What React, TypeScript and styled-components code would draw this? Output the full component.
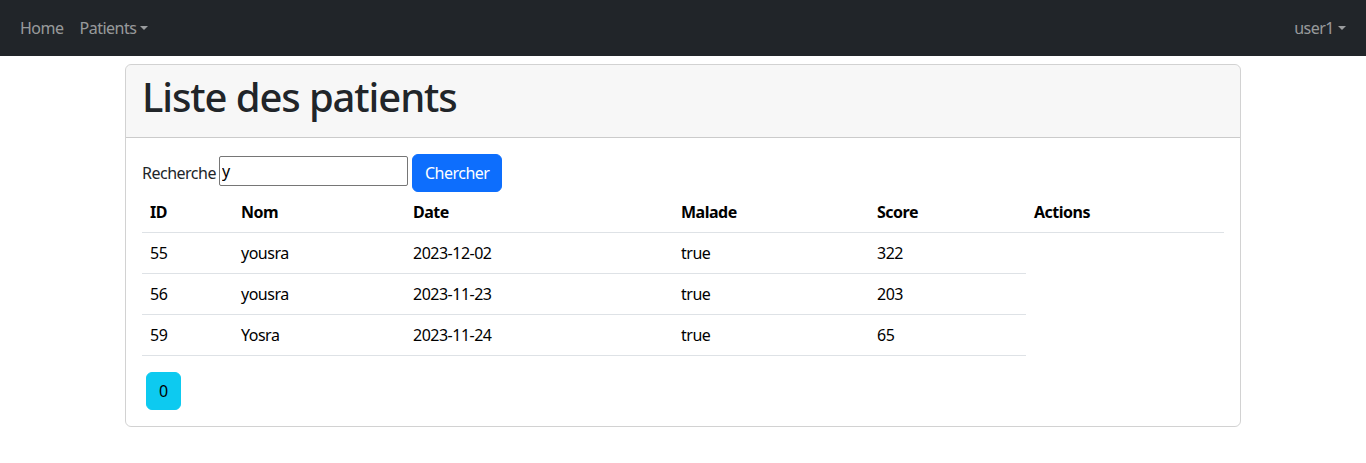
import React from "react";
import styled, { createGlobalStyle } from "styled-components";

const FONT = `"Noto Sans", "Open Sans", "Liberation Sans", sans-serif`;

const Global = createGlobalStyle`
  * { box-sizing: border-box; }
  body {
    margin: 0;
    font-family: ${FONT};
    font-size: 16px;
    line-height: 1.5;
    letter-spacing: -0.5px;
    color: #212529;
    background: #fff;
  }
`;

const NavBar = styled.nav`
  height: 56px;
  background: #212529;
  display: flex;
  align-items: center;
  justify-content: space-between;
  padding: 0 12px;
`;

const NavGroup = styled.div`
  display: flex;
  align-items: center;
`;

const NavLink = styled.a`
  color: rgba(255, 255, 255, 0.55);
  text-decoration: none;
  padding: 8px;
  font-size: 16px;
  line-height: 24px;
  cursor: pointer;
`;

const Caret = styled.span`
  display: inline-block;
  margin-left: 4px;
  vertical-align: 4px;
  border-top: 4.8px solid;
  border-right: 4.8px solid transparent;
  border-left: 4.8px solid transparent;
  border-bottom: 0;
`;

const Container = styled.div`
  width: 1140px;
  margin: 0 auto;
  padding: 0 12px;
`;

const Card = styled.div`
  margin-top: 8px;
  border: 1px solid rgba(0, 0, 0, 0.175);
  border-radius: 6px;
  overflow: hidden;
`;

const CardHeader = styled.div`
  background: rgba(0, 0, 0, 0.03);
  padding: 8px 16px;
  border-bottom: 1px solid rgba(0, 0, 0, 0.175);
`;

const Title = styled.h1`
  margin: 0 0 8px;
  font-size: 40px;
  font-weight: 500;
  line-height: 1.2;
  letter-spacing: -1.1px;
  color: #212529;
`;

const CardBody = styled.div`
  padding: 16px;
`;

const SearchForm = styled.form`
  display: flex;
  align-items: center;
  height: 38px;
`;

const Label = styled.label`
  font-size: 16px;
  margin-right: 3px;
`;

const Input = styled.input`
  width: 189px;
  height: 30px;
  border: 1px solid #767676;
  border-radius: 2px;
  padding: 1px 2px;
  font-family: ${FONT};
  font-size: 16px;
  color: #000;
  margin: 0 4px 4px 0;
`;

const Button = styled.button<{ $variant: "primary" | "info" }>`
  font-family: ${FONT};
  font-size: 16px;
  line-height: 24px;
  letter-spacing: -0.5px;
  padding: 6px 12px;
  border-radius: 6px;
  border: 1px solid ${(p) => (p.$variant === "primary" ? "#0d6efd" : "#0dcaf0")};
  background: ${(p) => (p.$variant === "primary" ? "#0d6efd" : "#0dcaf0")};
  color: ${(p) => (p.$variant === "primary" ? "#fff" : "#000")};
  cursor: pointer;
`;

const Table = styled.table`
  width: 100%;
  table-layout: fixed;
  border-collapse: collapse;
  margin-bottom: 16px;
  color: #000;
`;

const Th = styled.th`
  text-align: left;
  font-weight: 700;
  padding: 8px;
  line-height: 24px;
  border-bottom: 1px solid #dee2e6;
`;

const Td = styled.td`
  padding: 8px;
  line-height: 24px;
  border-bottom: 1px solid #dee2e6;
`;

const Pager = styled.ul`
  list-style: none;
  margin: 0;
  padding: 0;
  display: flex;
`;

const PageItem = styled.li`
  margin-left: 4px;
`;

const cols = [91, 172, 268, 196, 157, 198];
const headers = ["ID", "Nom", "Date", "Malade", "Score", "Actions"];
const rows = [
  ["55", "yousra", "2023-12-02", "true", "322"],
  ["56", "yousra", "2023-11-23", "true", "203"],
  ["59", "Yosra", "2023-11-24", "true", "65"],
];

export default function App() {
  return (
    <>
      <Global />
      <NavBar>
        <NavGroup>
          <NavLink>Home</NavLink>
          <NavLink>
            Patients
            <Caret />
          </NavLink>
        </NavGroup>
        <NavGroup>
          <NavLink>
            user1
            <Caret />
          </NavLink>
        </NavGroup>
      </NavBar>
      <Container>
        <Card>
          <CardHeader>
            <Title>Liste des patients</Title>
          </CardHeader>
          <CardBody>
            <SearchForm onSubmit={(e) => e.preventDefault()}>
              <Label>Recherche</Label>
              <Input defaultValue="y" />
              <Button $variant="primary">Chercher</Button>
            </SearchForm>
            <Table>
              <colgroup>
                {cols.map((w, i) => (
                  <col key={i} style={{ width: w }} />
                ))}
              </colgroup>
              <thead>
                <tr>
                  {headers.map((h) => (
                    <Th key={h}>{h}</Th>
                  ))}
                </tr>
              </thead>
              <tbody>
                {rows.map((r) => (
                  <tr key={r[0]}>
                    {r.map((c, i) => (
                      <Td key={i}>{c}</Td>
                    ))}
                  </tr>
                ))}
              </tbody>
            </Table>
            <Pager>
              <PageItem>
                <Button $variant="info">0</Button>
              </PageItem>
            </Pager>
          </CardBody>
        </Card>
      </Container>
    </>
  );
}
